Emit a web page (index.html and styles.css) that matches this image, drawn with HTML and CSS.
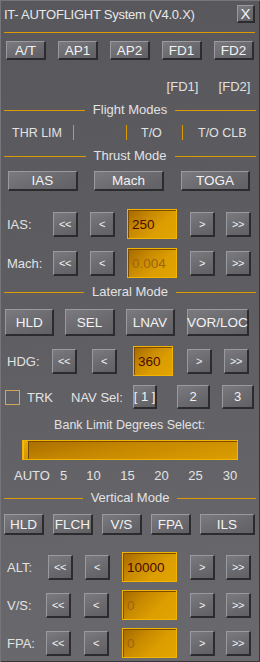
FILE: index.html
```html
<!DOCTYPE html>
<html>
<head>
<meta charset="utf-8">
<link rel="stylesheet" href="styles.css">
</head>
<body>
<div class="win">
  <div class="header">
    <div class="title">IT- AUTOFLIGHT System (V4.0.X)</div>
    <div class="btn close">X</div>
  </div>

  <div class="row5">
    <div class="btn b-top">A/T</div>
    <div class="btn b-top">AP1</div>
    <div class="btn b-top">AP2</div>
    <div class="btn b-top">FD1</div>
    <div class="btn b-top">FD2</div>
  </div>
  <div class="row5 fdlabels">
    <span></span><span></span><span></span>
    <span class="fdl">[FD1]</span>
    <span class="fdl">[FD2]</span>
  </div>

  <div class="sect s-flight"><span class="line"></span><span class="stext">Flight Modes</span><span class="line"></span></div>
  <div class="modes">
    <span class="m1">THR LIM</span>
    <span class="bar"></span>
    <span></span>
    <span class="bar"></span>
    <span class="m2">T/O</span>
    <span class="bar"></span>
    <span class="m3">T/O CLB</span>
  </div>

  <div class="sect s-thrust"><span class="line"></span><span class="stext">Thrust Mode</span><span class="line"></span></div>
  <div class="row3">
    <div class="btn b-thr">IAS</div>
    <div class="btn b-thr">Mach</div>
    <div class="btn b-thr">TOGA</div>
  </div>

  <div class="spin sp-ias r-ias">
    <span class="lbl">IAS:</span>
    <div class="btn sb">&lt;&lt;</div>
    <div class="btn sb">&lt;</div>
    <div class="field f50">250</div>
    <div class="btn sb">&gt;</div>
    <div class="btn sb">&gt;&gt;</div>
  </div>
  <div class="spin sp-ias r-mach">
    <span class="lbl">Mach:</span>
    <div class="btn sb">&lt;&lt;</div>
    <div class="btn sb">&lt;</div>
    <div class="field f50 off">0.004</div>
    <div class="btn sb">&gt;</div>
    <div class="btn sb">&gt;&gt;</div>
  </div>

  <div class="sect s-lat"><span class="line"></span><span class="stext">Lateral Mode</span><span class="line"></span></div>
  <div class="row-lat">
    <div class="btn b-lat">HLD</div>
    <div class="btn b-lat">SEL</div>
    <div class="btn b-lat">LNAV</div>
    <div class="btn b-lat b-wide">VOR/LOC</div>
  </div>
  <div class="spin sp-hdg r-hdg">
    <span class="lbl">HDG:</span>
    <div class="btn sb">&lt;&lt;</div>
    <div class="btn sb">&lt;</div>
    <div class="field f40">360</div>
    <div class="btn sb">&gt;</div>
    <div class="btn sb">&gt;&gt;</div>
  </div>
  <div class="trk">
    <span class="chk"></span>
    <span class="trklbl">TRK</span>
    <span class="navlbl">NAV Sel:</span>
    <div class="btn nb nb1">[ 1 ]</div>
    <div class="btn nb nb2">2</div>
    <div class="btn nb nb3">3</div>
  </div>

  <div class="bank">Bank Limit Degrees Select:</div>
  <div class="slider"><span class="handle"></span></div>
  <div class="ticks">
    <span>AUTO</span><span>5</span><span>10</span><span>15</span><span>20</span><span>25</span><span>30</span>
  </div>

  <div class="sect s-vert"><span class="line"></span><span class="stext">Vertical Mode</span><span class="line"></span></div>
  <div class="row-vert">
    <div class="btn b-vert">HLD</div>
    <div class="btn b-vert">FLCH</div>
    <div class="btn b-vert">V/S</div>
    <div class="btn b-vert">FPA</div>
    <div class="btn b-vert b-ils">ILS</div>
  </div>
  <div class="spin sp-alt r-alt">
    <span class="lbl">ALT:</span>
    <div class="btn sb">&lt;&lt;</div>
    <div class="btn sb">&lt;</div>
    <div class="field f55">10000</div>
    <div class="btn sb">&gt;</div>
    <div class="btn sb">&gt;&gt;</div>
  </div>
  <div class="spin sp-vs r-vs">
    <span class="lbl">V/S:</span>
    <div class="btn sb">&lt;&lt;</div>
    <div class="btn sb">&lt;</div>
    <div class="field f55 off">0</div>
    <div class="btn sb">&gt;</div>
    <div class="btn sb">&gt;&gt;</div>
  </div>
  <div class="spin sp-vs r-fpa">
    <span class="lbl">FPA:</span>
    <div class="btn sb">&lt;&lt;</div>
    <div class="btn sb">&lt;</div>
    <div class="field f55 off">0</div>
    <div class="btn sb">&gt;</div>
    <div class="btn sb">&gt;&gt;</div>
  </div>
</div>
</body>
</html>
```

FILE: styles.css
```css
html, body {
  margin: 0;
  padding: 0;
  background: #5e5e63;
}
.win {
  width: 260px;
  height: 662px;
  box-sizing: border-box;
  overflow: hidden;
  background: linear-gradient(172deg, #57575c 0%, #5d5d62 45%, #69696e 100%);
  box-shadow: inset 1px 1px 0 #76767a, inset -1px -1px 0 #36363a;
  font-family: "Liberation Sans", Arial, sans-serif;
  font-size: 13px;
  color: #e4e4e4;
  display: flex;
  flex-direction: column;
}

/* header */
.header {
  height: 33px;
  box-sizing: border-box;
  margin: 0 5px 0 4px;
  padding-top: 5px;
  border-bottom: 1px solid #dc9a00;
  display: flex;
  justify-content: space-between;
  align-items: flex-start;
}
.title {
  font-size: 13px;
  line-height: 18px;
  margin-top: 1px;
  letter-spacing: -0.25px;
  color: #e8e8e8;
}

/* generic button */
.btn {
  box-sizing: border-box;
  display: flex;
  align-items: center;
  justify-content: center;
  color: #f2f2f2;
  background: linear-gradient(160deg, #7a7a7f 0%, #6b6b70 50%, #606065 100%);
  border-style: solid;
  border-width: 1px 2px 2px 1px;
  border-color: #9a9a9e #2c2c2f #2c2c2f #9a9a9e;
  white-space: nowrap;
}
.close {
  width: 18px;
  height: 18px;
  font-size: 15px;
}

/* top row */
.row5 {
  display: grid;
  grid-template-columns: repeat(5, 40px);
  column-gap: 12px;
  margin: 8px 0 0 6px;
}
.b-top { height: 19px; font-size: 13.5px; }
.fdlabels {
  margin-top: 19px;
  height: 16px;
  line-height: 16px;
}
.fdl {
  text-align: center;
  font-size: 13px;
  color: #e0e0e0;
  padding-left: 1px;
}

/* section headers */
.sect {
  display: flex;
  align-items: center;
  height: 16px;
  margin: 0 4px 0 4px;
}
.sect .line {
  flex: 1;
  height: 1px;
  background: #dc9a00;
}
.stext {
  padding: 0 8px;
  line-height: 16px;
  color: #e2e2e2;
}
.s-flight { margin-top: 7px; }
.s-thrust { margin-top: 7px; }
.s-lat { margin-top: 6px; }
.s-vert { margin-top: 6px; }

/* flight modes */
.modes {
  margin-top: 7px;
  height: 16px;
  line-height: 16px;
  display: grid;
  grid-template-columns: 73px 1px 52px 1px 55px 1px 1fr;
  font-size: 12.5px;
  color: #e2e2e2;
}
.modes .bar {
  background: #dc9a00;
  height: 15px;
}
.m1 { padding-left: 12px; }
.m2 { padding-left: 14px; }
.m3 { padding-left: 15px; }

/* thrust buttons */
.row3 {
  display: grid;
  grid-template-columns: repeat(3, 70px);
  column-gap: 16px;
  margin: 7px 0 0 8px;
}
.row3 .btn:nth-child(3) { margin-left: 1px; }
.b-thr { height: 20px; font-size: 13.5px; }

/* spin rows */
.spin {
  display: grid;
  align-items: center;
  height: 30px;
}
.spin .lbl {
  padding-left: 7px;
  color: #e2e2e2;
}
.sb {
  width: 25px;
  height: 25px;
  font-size: 11px;
  letter-spacing: -0.5px;
}
.sp-ias { grid-template-columns: 53px 37px 37px 63px 36px 25px; }
.sp-hdg { grid-template-columns: 52px 40px 41px 54px 37px 25px; }
.sp-alt { grid-template-columns: 48px 37px 37px 68px 36px 25px; }
.sp-vs  { grid-template-columns: 46px 38px 38px 68px 36px 25px; }
.r-ias { margin-top: 18px; }
.r-mach { margin-top: 9px; }
.r-hdg { margin-top: 10px; }
.r-alt { margin-top: 17px; }
.r-vs { margin-top: 8px; }
.r-fpa { margin-top: 8px; }

.field {
  box-sizing: border-box;
  height: 30px;
  display: flex;
  align-items: center;
  padding-left: 4px;
  border: 1px solid #f2b400;
  background: linear-gradient(135deg, #a46800 0%, #c88a00 35%, #dc9e00 65%, #e2a400 100%);
  box-shadow: inset 1px 1px 0 #7c4c00;
  color: #4a0c00;
  font-size: 13.5px;
}
.field.off { color: #9c6412; }
.f50 { width: 50px; }
.f40 { width: 40px; }
.f55 { width: 55px; }

/* lateral */
.row-lat {
  display: flex;
  margin: 9px 0 0 5px;
}
.b-lat {
  width: 50px;
  height: 27px;
  margin-right: 11px;
  font-size: 13.5px;
}
.row-lat .btn:nth-child(3) { margin-right: 12px; }
.b-wide { width: 62px; }

/* trk row */
.trk {
  display: flex;
  align-items: center;
  height: 24px;
  margin: 9px 0 0 5px;
}
.chk {
  box-sizing: border-box;
  width: 15px;
  height: 15px;
  border: 1px solid #d2a65a;
}
.trklbl { margin-left: 7px; width: 44px; }
.navlbl { width: 62px; }
.nb { height: 24px; }
.nb1 { width: 24px; margin-right: 20px; }
.nb2 { width: 33px; margin-right: 12px; }
.nb3 { width: 32px; }

/* bank */
.bank {
  margin-top: 8px;
  height: 16px;
  line-height: 16px;
  text-align: center;
  font-size: 12.5px;
  color: #e2e2e2;
  padding-right: 1px;
}
.slider {
  box-sizing: border-box;
  width: 216px;
  height: 20px;
  margin: 7px 0 0 22px;
  border: 1px solid #f2b400;
  background: linear-gradient(170deg, #a86c00 0%, #c48600 40%, #dc9e00 100%);
  box-shadow: inset 0 1px 0 #7c4c00;
  display: flex;
}
.handle {
  width: 6px;
  height: 100%;
  box-sizing: border-box;
  background: linear-gradient(#eaaa00, #d49400);
  border-left: 1px solid #f6c000;
  border-right: 1px solid #6e4600;
}
.ticks {
  display: grid;
  grid-template-columns: 34px 31px 29px 39px 29px 39px 30px;
  margin: 8px 0 0 14px;
  height: 16px;
  line-height: 16px;
  text-align: center;
  color: #e2e2e2;
}

/* vertical */
.row-vert {
  display: flex;
  margin: 8px 0 0 4px;
}
.b-vert {
  width: 40px;
  height: 21px;
  margin-right: 9px;
  font-size: 13.5px;
}
.b-ils { width: 55px; margin-right: 0; }
```
